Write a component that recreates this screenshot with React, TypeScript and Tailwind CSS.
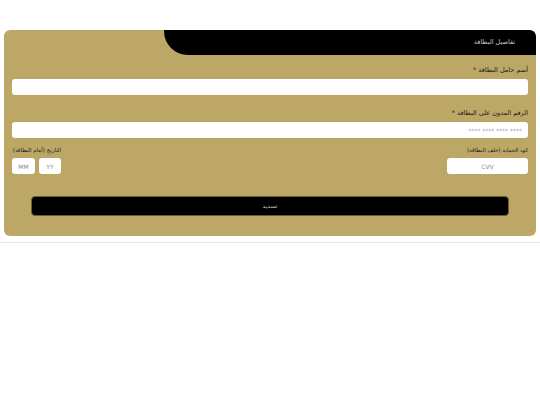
export default function App() {
  const font = { fontFamily: '"DejaVu Sans", "Noto Sans", sans-serif' }
  return (
    <div className="w-[540px] h-[405px] bg-white" style={font}>
      <div className="pt-[30px] border-b border-[#e5e5e5]">
        <div dir="rtl" className="mx-[4px] mb-[6px] rounded-[6px] bg-[#bca766] overflow-hidden">
          <div className="flex">
            <div className="w-[372px] h-[25px] bg-black rounded-bl-[24px] rounded-tr-[6px] flex items-center pr-[21px]">
              <span className="text-[6.5px] text-[#c8c8c8]">تفاصيل البطاقة</span>
            </div>
          </div>
          <div className="px-[8px] pt-[10px] pb-[20px]">
            <label className="block text-[6.5px] text-[#1a1a1a] leading-[10px]">أسم حامل البطاقة *</label>
            <input className="mt-[4px] block w-full h-[16px] bg-white rounded-[3px] outline-none" />

            <label className="block mt-[13px] text-[6.5px] text-[#1a1a1a] leading-[10px]">الرقم المدون على البطاقة *</label>
            <input
              placeholder="**** **** **** ****"
              className="mt-[4px] block w-full h-[16px] bg-white rounded-[3px] px-[6px] text-[6px] placeholder:text-[#a0a0a0] outline-none"
            />

            <div className="mt-[7px] flex justify-between">
              <div className="w-[81px]">
                <label className="block text-[5.5px] text-[#1a1a1a] leading-[10px] whitespace-nowrap">كود الحماية (خلف البطاقة)</label>
                <input
                  placeholder="CVV"
                  className="mt-[3px] block w-full h-[16px] bg-white rounded-[3px] text-center text-[6px] placeholder:text-[#8a8a8a] outline-none"
                />
              </div>
              <div className="w-[49px]">
                <label className="block text-[5.5px] text-[#1a1a1a] leading-[10px] whitespace-nowrap">التاريخ (أمام البطاقة)</label>
                <div className="mt-[3px] flex gap-[4px]">
                  <input
                    placeholder="YY"
                    className="w-[22px] h-[16px] bg-white rounded-[3px] text-center text-[6px] placeholder:text-[#8a8a8a] outline-none"
                  />
                  <input
                    placeholder="MM"
                    className="w-[23px] h-[16px] bg-white rounded-[3px] text-center text-[6px] placeholder:text-[#8a8a8a] outline-none"
                  />
                </div>
              </div>
            </div>

            <div className="mt-[17px] px-[19px]">
              <button className="w-full h-[20px] bg-black rounded-[4px] border border-[#6b5f3a] text-[6px] text-[#bdbdbd]">
                تسديد
              </button>
            </div>
          </div>
        </div>
      </div>
    </div>
  )
}
